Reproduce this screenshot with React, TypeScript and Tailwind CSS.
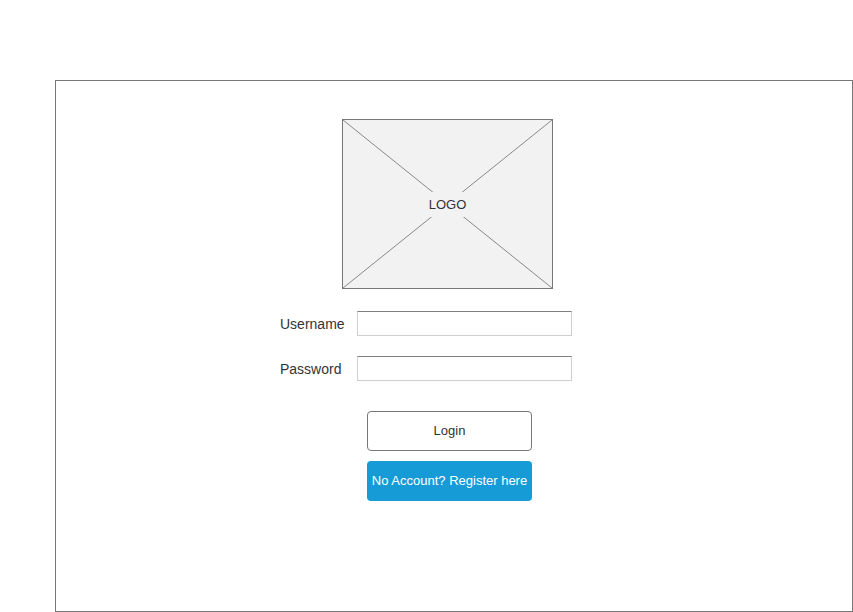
export default function App() {
  return (
    <div className="w-[853px] h-[612px] bg-white pt-[80px] pl-[55px] overflow-hidden font-['Liberation_Sans',Arial,sans-serif] text-[#333]">
      <div className="w-[798px] h-[532px] border border-[#777] pt-[38px]">
        {/* Logo placeholder */}
        <div className="relative ml-[286px] w-[211px] h-[170px] border border-[#777] bg-[#f2f2f2]">
          <svg className="absolute inset-0" width="209" height="168" viewBox="0 0 209 168">
            <line x1="0" y1="0" x2="209" y2="168" stroke="#888" strokeWidth="1" />
            <line x1="209" y1="0" x2="0" y2="168" stroke="#888" strokeWidth="1" />
          </svg>
          <div className="absolute inset-0 flex items-center justify-center">
            <span className="bg-[#f2f2f2] px-[6px] py-[6px] text-[13px] leading-none">LOGO</span>
          </div>
        </div>

        {/* Username */}
        <div className="flex items-center mt-[22px] ml-[224px]">
          <span className="w-[77px] text-sm">Username</span>
          <div className="w-[215px] h-[25px] bg-white border border-[#cfcfcf] border-t-[#7f7f7f]" />
        </div>

        {/* Password */}
        <div className="flex items-center mt-[20px] ml-[224px]">
          <span className="w-[77px] text-sm">Password</span>
          <div className="w-[215px] h-[25px] bg-white border border-[#cfcfcf] border-t-[#7f7f7f]" />
        </div>

        {/* Buttons */}
        <div className="flex flex-col gap-[10px] mt-[30px] ml-[311px]">
          <button className="w-[165px] h-[40px] rounded-[4px] border border-[#777] bg-white text-[13px] text-[#333]">
            Login
          </button>
          <button className="w-[165px] h-[40px] rounded-[4px] bg-[#179bd7] text-[13px] text-white">
            No Account? Register here
          </button>
        </div>
      </div>
    </div>
  )
}
